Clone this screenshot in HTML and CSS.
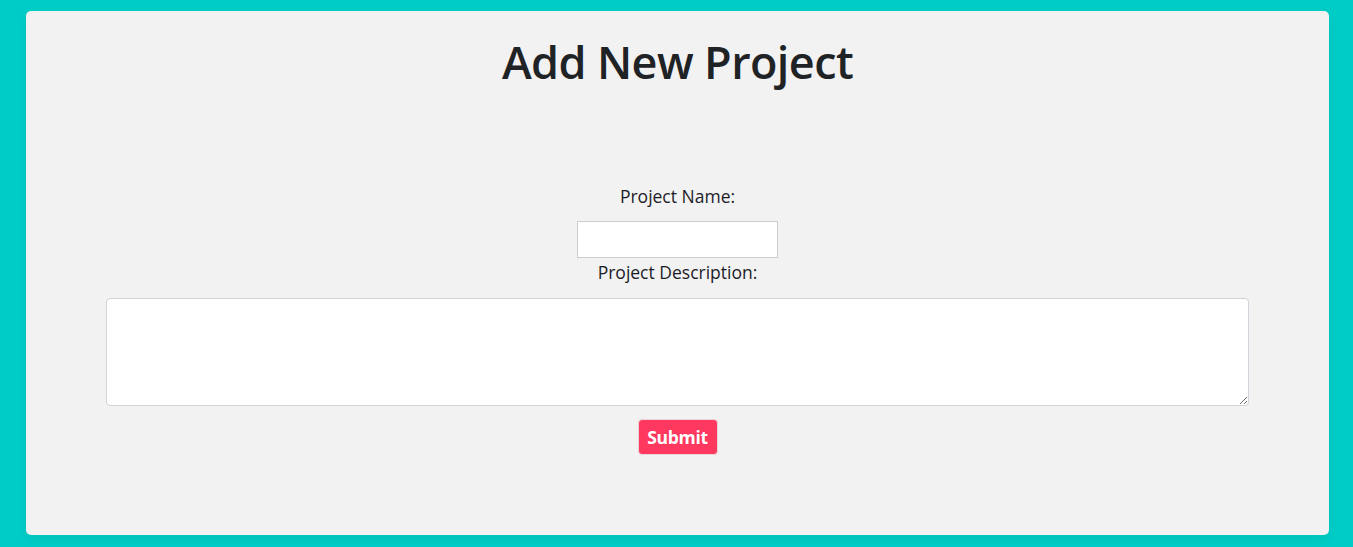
FILE: index.html
```html
<!DOCTYPE html>
<html>
<head>
<meta charset="utf-8">
<link rel="stylesheet" href="styles.css">
</head>
<body>
<div class="card">
  <h1 class="title">Add New Project</h1>
  <form class="form">
    <label class="label" for="name">Project Name:</label>
    <input class="input" id="name" type="text">
    <label class="label label-desc" for="desc">Project Description:</label>
    <textarea class="textarea" id="desc"></textarea>
    <button class="submit" type="button">Submit</button>
  </form>
</div>
</body>
</html>
```
FILE: styles.css
```css
html, body {
  margin: 0;
  padding: 0;
}
body {
  background: #00ccc6;
  width: 1353px;
  height: 547px;
  overflow: hidden;
  padding: 11px 24px 12px 26px;
  box-sizing: border-box;
  font-family: "Open Sans", "Noto Sans", sans-serif;
}
.card {
  background: #f2f2f2;
  border-radius: 5px;
  height: 524px;
  box-sizing: border-box;
  padding-top: 22px;
  box-shadow: 0 4px 12px rgba(0, 0, 0, 0.06);
}
.title {
  margin: 0;
  text-align: center;
  font-family: "Open Sans", sans-serif;
  font-weight: 600;
  font-size: 45px;
  line-height: 58px;
  color: #1f2326;
  letter-spacing: -0.6px;
}
.form {
  display: flex;
  flex-direction: column;
  align-items: center;
  margin-top: 93px;
  padding: 0 80px;
}
.label {
  font-size: 17.5px;
  line-height: 24px;
  color: #1c1c28;
  letter-spacing: 0;
}
.input {
  margin-top: 13px;
  width: 201px;
  height: 37px;
  box-sizing: border-box;
  border: 1px solid #cccccc;
  border-radius: 0;
  background: #fff;
}
.label-desc {
  margin-top: 2px;
}
.textarea {
  margin-top: 14px;
  width: 100%;
  height: 108px;
  box-sizing: border-box;
  border: 1px solid #cfd4da;
  border-radius: 4px;
  background: #fff;
  display: block;
}
.submit {
  margin-top: 13px;
  width: 80px;
  height: 36px;
  background: #ff3860;
  border: 1px solid #e8d6da;
  border-radius: 4px;
  color: #fff;
  font-family: "Open Sans", "Noto Sans", sans-serif;
  font-weight: 700;
  font-size: 17.5px;
  letter-spacing: -0.3px;
  padding: 0;
}
```
